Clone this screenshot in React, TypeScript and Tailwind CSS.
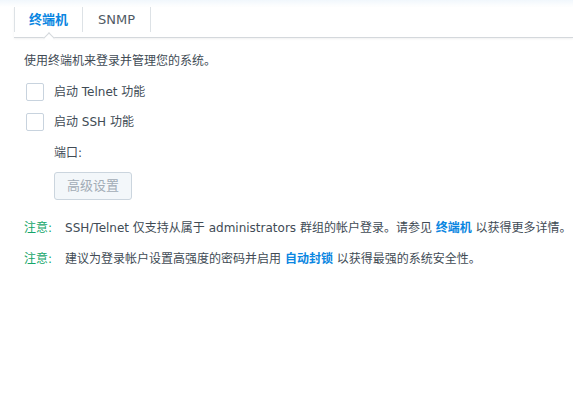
const font = {
  fontFamily: '"DejaVu Sans", "Noto Sans CJK SC", sans-serif',
};

const Checkbox = () => (
  <span className="block size-[18px] rounded-[2px] border border-[#c8d3de] bg-white" />
);

export default function App() {
  return (
    <div
      className="h-[404px] w-[573px] overflow-hidden bg-white text-[12px] text-[#414b55]"
      style={font}
    >
      <div className="h-[7px] bg-gradient-to-b from-[#f1f7fc] to-white" />
      <div className="relative ml-[14px] flex h-[31px] border-b border-[#d4d8dc] shadow-[0_1px_2px_rgba(0,0,0,0.06)]">
        <div className="relative flex h-[25px] w-[69px] items-center justify-center border-x border-[#dde2e6] text-[13px] font-bold text-[#0a86e1]">
          终端机
          <span className="absolute -bottom-[10px] left-1/2 size-[8px] -translate-x-1/2 rotate-45 border-l border-t border-[#d4d8dc] bg-white" />
        </div>
        <div className="flex h-[25px] w-[68px] items-center justify-center border-r border-[#dde2e6] text-[13px] text-[#505a64]">
          SNMP
        </div>
      </div>

      <div className="pl-[24px] pt-[15px]">
        <p className="leading-[16px]">使用终端机来登录并管理您的系统。</p>

        <div className="mt-[14px] flex flex-col gap-[12px] pl-[2px]">
          <label className="flex items-center gap-[10px]">
            <Checkbox />
            <span>启动 Telnet 功能</span>
          </label>
          <label className="flex items-center gap-[10px]">
            <Checkbox />
            <span>启动 SSH 功能</span>
          </label>
        </div>

        <div className="pl-[30px]">
          <p className="mt-[14px] leading-[16px]">端口:</p>
          <button className="mt-[11px] h-[28px] w-[78px] rounded-[3px] border border-[#cbd5de] bg-[#f3f7fa] text-[13px] text-[#a2acb6]">
            高级设置
          </button>
        </div>

        <div className="mt-[20px] flex flex-col gap-[15px] whitespace-nowrap">
          <p className="leading-[16px]">
            <span className="mr-[13px] text-[#15a66a]">注意:</span>
            SSH/Telnet 仅支持从属于 administrators 群组的帐户登录。请参见{" "}
            <span className="font-bold text-[#0a86e1]">终端机</span>{" "}
            以获得更多详情。
          </p>
          <p className="leading-[16px]">
            <span className="mr-[13px] text-[#15a66a]">注意:</span>
            建议为登录帐户设置高强度的密码并启用{" "}
            <span className="font-bold text-[#0a86e1]">自动封锁</span>{" "}
            以获得最强的系统安全性。
          </p>
        </div>
      </div>
    </div>
  );
}
